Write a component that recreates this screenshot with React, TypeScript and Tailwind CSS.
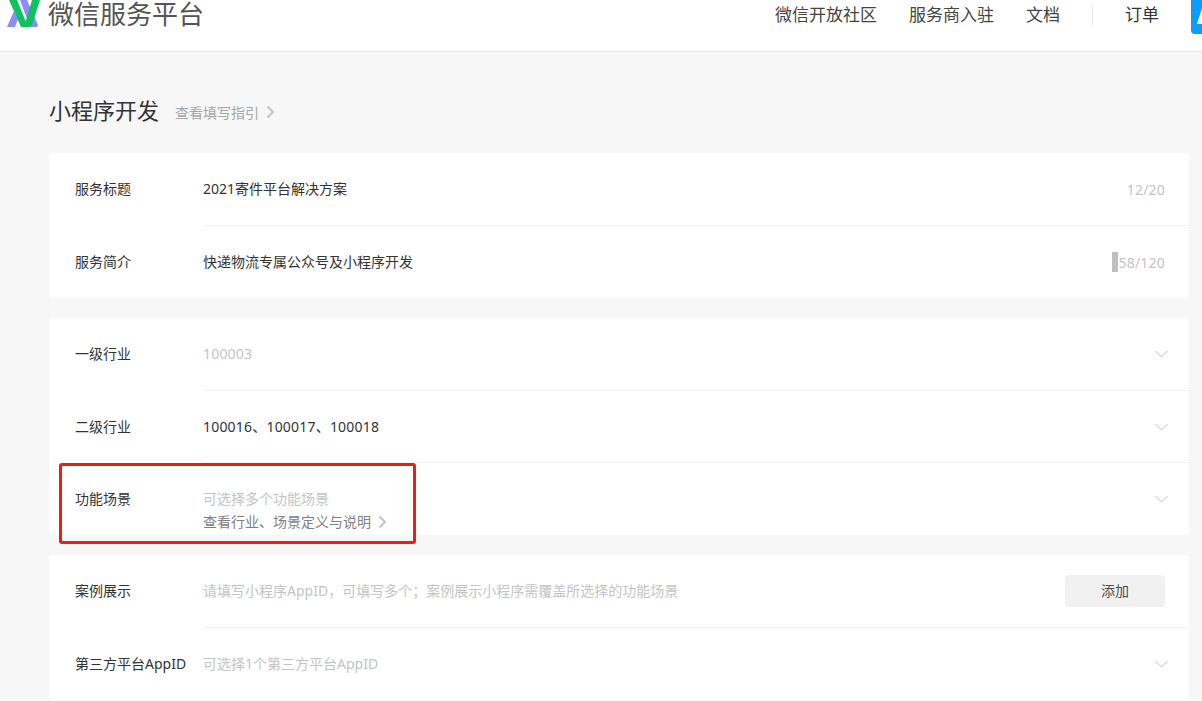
import React from 'react';

const font = "font-['Noto_Sans','Noto_Sans_CJK_SC',sans-serif]";

const Chevron: React.FC<{ className?: string }> = ({ className }) => (
  <svg width="9" height="14" viewBox="0 0 9 14" fill="none" className={className}>
    <path d="M1.5 1.5 7 7l-5.5 5.5" stroke="#c4c4c4" strokeWidth="2" />
  </svg>
);

const Down: React.FC = () => (
  <svg width="13" height="8" viewBox="0 0 13 8" fill="none" className="mr-[21px] shrink-0">
    <path d="M.5 1 6.5 7l6-6" stroke="#bdbdbd" strokeWidth="1" />
  </svg>
);

const Row: React.FC<{
  label: string;
  children: React.ReactNode;
  right?: React.ReactNode;
  divider?: boolean;
  className?: string;
}> = ({ label, children, right, divider, className }) => (
  <div className={`flex pl-[26px] ${className ?? 'h-[72px]'}`}>
    <div className="w-[128px] shrink-0 pt-[27px] text-[14px] leading-[18px] text-[#333333]">{label}</div>
    <div className={`flex min-w-0 flex-1 justify-between ${divider ? 'border-b border-[#f1f1f1]' : ''}`}>
      <div className="min-w-0 pt-[27px] text-[14px] leading-[18px] text-[#333333]">{children}</div>
      <div className="flex h-[72px] items-center">{right}</div>
    </div>
  </div>
);

const Count: React.FC<{ value: string; cursor?: boolean }> = ({ value, cursor }) => (
  <div className="mr-6 flex items-center text-[14px] tracking-[0.2px] text-[#c4c4c4]">
    {cursor && <span className="mr-px h-5 w-1.5 bg-[#bfbfbf]" />}
    {value}
  </div>
);

const Card: React.FC<{ children: React.ReactNode; className?: string }> = ({ children, className }) => (
  <div className={`flex w-[1140px] flex-col rounded-[4px] bg-white ${className ?? ''}`}>{children}</div>
);

export default function App() {
  return (
    <div className={`relative h-[701px] w-[1202px] overflow-hidden bg-[#f7f7f7] ${font}`}>
      <header className="flex h-[52px] items-start justify-between border-b border-[#e6e6e6] bg-white">
        <div className="flex items-center">
          <svg width="48" height="28" viewBox="0 0 48 28" className="shrink-0">
            <path d="M7 27 14 11l4 8-3 8Z" fill="#8d8cf5" />
            <path d="M20 0h7l11 25-1 2h-7Z" fill="#8d8cf5" />
            <path d="M9 0h8l11 27h-7Z" fill="#10c15f" />
            <path d="M32 0h8L32 25a4 4 0 0 1-4 2h-4Z" fill="#10c15f" />
          </svg>
          <span className="text-[26px] leading-[28px] text-[#555555]">微信服务平台</span>
        </div>
        <nav className="flex h-[30px] items-center text-[17px] text-[#444444]">
          <span>微信开放社区</span>
          <span className="ml-8">服务商入驻</span>
          <span className="ml-8">文档</span>
          <span className="ml-8 h-5 w-px bg-[#e8e8e8]" />
          <span className="ml-8 text-[#333333]">订单</span>
          <svg width="11" height="34" viewBox="0 0 11 34" className="ml-8 self-start">
            <path d="M0 0h11v34H4a4 4 0 0 1-4-4Z" fill="#0a9dfa" />
            <path d="M6 24 11 8v16Z" fill="#ffffff" />
          </svg>
        </nav>
      </header>

      <main className="px-[49px] pt-[44px]">
        <div className="flex h-[30px] items-center">
          <h1 className="-mt-0.5 text-[22px] font-normal text-[#333333]">小程序开发</h1>
          <span className="mt-0.5 ml-4 text-[14px] text-[#a6a6a6]">查看填写指引</span>
          <Chevron className="mt-0.5 ml-[7px]" />
        </div>

        <Card className="mt-[27px]">
          <Row label="服务标题" divider className="h-[73px]" right={<Count value="12/20" />}>
            2021寄件平台解决方案
          </Row>
          <Row label="服务简介" right={<Count value="58/120" cursor />}>
            快递物流专属公众号及小程序开发
          </Row>
        </Card>

        <Card className="mt-5">
          <Row label="一级行业" divider className="h-[73px]" right={<Down />}>
            <span className="tracking-[0.2px] text-[#c4c4c4]">100003</span>
          </Row>
          <Row label="二级行业" divider right={<Down />}>
            <span className="tracking-[0.2px]">100016、100017、100018</span>
          </Row>
          <Row label="功能场景" right={<Down />}>
            <div className="text-[#c4c4c4]">可选择多个功能场景</div>
            <div className="mt-[5px] flex items-center text-[#808080]">
              查看行业、场景定义与说明
              <Chevron className="ml-[7px]" />
            </div>
          </Row>
        </Card>

        <Card className="mt-5">
          <Row
            label="案例展示"
            divider
            className="h-[73px]"
            right={
              <button className="mr-6 h-8 w-[100px] rounded-[4px] bg-[#f1f1f1] pb-0.5 text-[14px] text-[#4d4d4d]">添加</button>
            }
          >
            <span className="text-[#c4c4c4]">请填写小程序AppID，可填写多个；案例展示小程序需覆盖所选择的功能场景</span>
          </Row>
          <Row label="第三方平台AppID" right={<Down />}>
            <span className="text-[#c4c4c4]">可选择1个第三方平台AppID</span>
          </Row>
        </Card>
      </main>

      <div className="absolute left-[59px] top-[463px] h-[81px] w-[357px] rounded-[3px] border-[3px] border-[#f01c14]" />
    </div>
  );
}
